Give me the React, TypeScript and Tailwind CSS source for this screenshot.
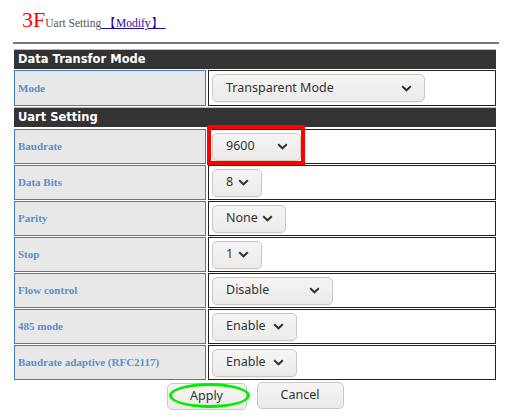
import React from "react";

type Row = { label: string; value: string; width: number; mark?: boolean };

const uartRows: Row[] = [
  { label: "Baudrate", value: "9600", width: 89, mark: true },
  { label: "Data Bits", value: "8", width: 50 },
  { label: "Parity", value: "None", width: 74 },
  { label: "Stop", value: "1", width: 50 },
  { label: "Flow control", value: "Disable", width: 121 },
  { label: "485 mode", value: "Enable", width: 85 },
  { label: "Baudrate adaptive (RFC2117)", value: "Enable", width: 85 },
];

function Chevron() {
  return (
    <svg width="11" height="7" viewBox="0 0 11 7" className="shrink-0">
      <path d="M1.2 1.2 L5.5 5.3 L9.8 1.2" fill="none" stroke="#333" strokeWidth="2" />
    </svg>
  );
}

function Select({ value, width }: { value: string; width: number }) {
  return (
    <div
      className="flex h-[28px] items-center justify-between rounded-[5px] border border-[#cdc7c2] bg-gradient-to-b from-[#f6f5f4] to-[#edebe9] pl-[13px] pr-[12px] font-['Noto_Sans',sans-serif] text-[12.5px] text-[#2e3436] shadow-[0_1px_0_rgba(0,0,0,0.06)]"
      style={{ width }}
    >
      <span className="leading-none">{value}</span>
      <Chevron />
    </div>
  );
}

function SectionHeader({ title }: { title: string }) {
  return (
    <div className="flex h-[20px] items-center border-t border-[#bbb] bg-[#333] pl-[4px] font-['DejaVu_Sans',sans-serif] text-[11.5px] font-bold text-white">
      {title}
    </div>
  );
}

function FieldRow({ row, height = 35 }: { row: Row; height?: number }) {
  return (
    <div className="flex gap-[2px]" style={{ height }}>
      <div className="flex w-[192px] items-center border border-[#3d7cc4] bg-[#e8e8e8] pl-[3px] font-['Liberation_Serif',serif] text-[11px] font-bold text-[#5690d0]">
        {row.label}
      </div>
      <div className="relative flex flex-1 items-center border border-[#222] pl-[3px]">
        <Select value={row.value} width={row.width} />
        {row.mark && (
          <div className="pointer-events-none absolute left-[-2px] top-[-5px] h-[40px] w-[98px] border-[4px] border-[#ff0000]" />
        )}
      </div>
    </div>
  );
}

export default function App() {
  return (
    <div className="h-[419px] w-[515px] overflow-hidden bg-white">
      <div className="flex items-baseline pl-[22px] pt-[7px]">
        <span className="font-['Liberation_Serif',serif] text-[22px] leading-[26px] text-[#ff0000]">3F</span>
        <span className="font-['Liberation_Serif',serif] text-[11.5px] text-[#555]">Uart Setting</span>
        <a className="font-['Liberation_Serif',serif] text-[11.5px] text-[#1a0dab] underline" href="#">
          &nbsp;【Modify】&nbsp;
        </a>
      </div>
      <div className="ml-[13px] mt-[9px] w-[486px] border-t-[2px] border-[#777]" />
      <div className="ml-[14px] mt-[5px] flex w-[482px] flex-col">
        <SectionHeader title="Data Transfor Mode" />
        <div className="mt-[1px]">
          <FieldRow row={{ label: "Mode", value: "Transparent Mode", width: 213 }} height={36} />
        </div>
        <div className="mt-[1px]">
          <SectionHeader title="Uart Setting" />
        </div>
        <div className="mt-[2px] flex flex-col gap-[1px]">
          {uartRows.map((r) => (
            <FieldRow key={r.label} row={r} />
          ))}
        </div>
        <div className="mt-[2px] flex justify-center gap-[10px] font-['Noto_Sans',sans-serif]">
          <div className="relative">
            <button className="h-[27px] w-[80px] rounded-[5px] border border-[#cdc7c2] bg-gradient-to-b from-[#f6f5f4] to-[#edebe9] text-[12.5px] text-[#2e3436]">
              Apply
            </button>
            <div className="pointer-events-none absolute left-[2px] top-[1px] h-[25px] w-[81px] rounded-[50%] border-[3px] border-[#00ee00]" />
          </div>
          <button className="h-[27px] w-[87px] rounded-[5px] border border-[#cdc7c2] bg-gradient-to-b from-[#f6f5f4] to-[#edebe9] text-[12.5px] text-[#2e3436]">
            Cancel
          </button>
        </div>
      </div>
    </div>
  );
}
